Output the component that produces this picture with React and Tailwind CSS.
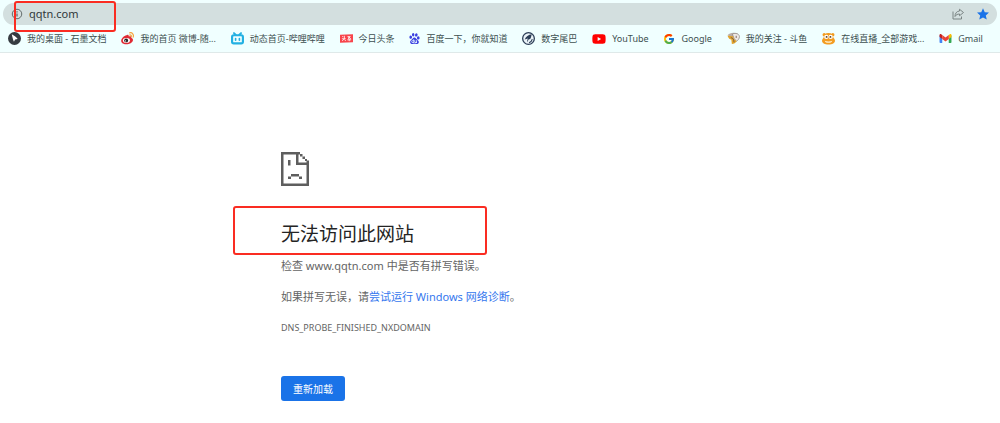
import { useState } from 'react';
import { FaYoutube } from 'react-icons/fa';
import { FcGoogle } from 'react-icons/fc';
import { SiBaidu } from 'react-icons/si';

function ShimoIcon() {
  return (
    <svg className="size-[13px] shrink-0" viewBox="0 0 24 24" aria-hidden="true">
      <circle cx="12" cy="12" r="12" fill="#353b41" />
      <path d="M7 4c1 5 2 9 4 14l2-4 5-1C15 9 11 6 7 4Z" fill="#fff" />
    </svg>
  );
}

function WeiboIcon() {
  return (
    <svg className="size-[13px] shrink-0" viewBox="0 0 24 24" aria-hidden="true">
      <path
        d="M10 6c2-2 5-1 4 2 4-1 6 0 5 3 4 1 4 5 1 8-5 5-16 5-19 0-3-5 4-12 9-13Z"
        fill="#e02b34"
      />
      <ellipse cx="10" cy="15.500" rx="6.500" ry="4.500" fill="#fff" />
      <circle cx="9.500" cy="15.500" r="3.600" fill="#222" />
      <circle cx="8.500" cy="16.500" r="1.100" fill="#fff" />
      <path d="M16 1.500c5-1 8 3 6.500 8M16 5.500c2-.5 3.500 1 3 3" fill="none" stroke="#f5a33b" strokeWidth="2.200" strokeLinecap="round" />
    </svg>
  );
}

function BilibiliIcon() {
  return (
    <svg className="size-[13px] shrink-0" viewBox="0 0 24 24" fill="none" stroke="#22b0e2" aria-hidden="true">
      <path d="m5.500 2 3 3M18.500 2l-3 3" strokeWidth="3.500" strokeLinecap="round" />
      <rect x="2" y="6" width="20" height="15" rx="3" strokeWidth="4" />
      <path d="M8.500 12v3M15.500 12v3" strokeWidth="3" strokeLinecap="round" />
    </svg>
  );
}

function ToutiaoIcon() {
  return (
    <svg className="size-[13px] shrink-0" viewBox="0 0 24 24" aria-hidden="true">
      <path d="M0 5 24 4v15L0 20Z" fill="#f8444b" />
      <path d="M4 8.500h2M3.500 12.500h7M8 7v5.500l-4 4M8.500 14l2 2.500M14 8.500h5l-4 4.500M14.500 9l6 4M13.500 14.500h7M17 13v4" fill="none" stroke="#fff" strokeWidth="1.500" />
    </svg>
  );
}

function DgtleIcon() {
  return (
    <svg className="size-[13px] shrink-0" viewBox="0 0 24 24" aria-hidden="true">
      <circle cx="12" cy="12" r="10.800" fill="#eaf3f8" stroke="#2c3e57" strokeWidth="2.400" />
      <path d="M5 14C7 8 12 5 18 4c-1 3-1 6-3 9l-3 1-2 5c-1-3 0-5 1-7-2 1-4 1-6 2Z" fill="#2c3e57" />
      <path d="M13 20c3-1 5-3 6-7" fill="none" stroke="#2c3e57" strokeWidth="2" />
    </svg>
  );
}

function DouyuIcon() {
  return (
    <svg className="size-[13px] shrink-0" viewBox="0 0 24 24" aria-hidden="true">
      <path d="M1 6C4 1 14 0 20 3l-3 5-7 3Z" fill="#b9aea8" />
      <path d="M10 4c5-3 12-1 13 4 0 5-3 7-5 9l-5-5Z" fill="#eee9e6" stroke="#8e8581" strokeWidth="1.400" />
      <path d="M1 7c2 5 4 7 7 7l1 8c4 0 7-2 9-5l-5-4-2-5Z" fill="#e3a42b" />
      <path d="m7 10 5 3 1 6M17 7v4" fill="none" stroke="#6d5752" strokeWidth="1.600" />
    </svg>
  );
}

function HuyaIcon() {
  return (
    <svg className="size-[13px] shrink-0" viewBox="0 0 24 24" aria-hidden="true">
      <circle cx="4" cy="5" r="3" fill="#f19a1f" />
      <circle cx="20" cy="5" r="3" fill="#f19a1f" />
      <path d="M12 2c6 0 9 4 9 8 2 2 3 4 3 6 0 4-5 7-12 7S0 20 0 16c0-2 1-4 3-6 0-4 3-8 9-8Z" fill="#f39c21" />
      <circle cx="8" cy="9" r="4" fill="#fff" />
      <circle cx="16" cy="9" r="4" fill="#fff" />
      <circle cx="8.500" cy="9" r="1.800" fill="#5d3b1d" />
      <circle cx="15.500" cy="9" r="1.800" fill="#5d3b1d" />
      <path d="M5 16c4 2 10 2 14 0-1 3-3 4-7 4s-6-1-7-4Z" fill="#fff0cf" />
    </svg>
  );
}

function GmailIcon() {
  return (
    <svg className="size-[13px] shrink-0" viewBox="0 0 24 24" aria-hidden="true">
      <path d="M1 6v13c0 1 .5 1.500 1.500 1.500H6V10Z" fill="#4285f4" />
      <path d="M23 6v13c0 1-.5 1.500-1.500 1.500H18V10Z" fill="#34a853" />
      <path d="M18 5.500 20 4c1.500-1 3 0 3 2v3l-5 4Z" fill="#fbbc04" />
      <path d="M1 6c0-2 1.500-3 3-2l2 1.500V13L1 9Z" fill="#c5221f" />
      <path d="m6 5.500 6 4.500 6-4.500V13l-6 4.500L6 13Z" fill="#ea4335" />
    </svg>
  );
}

function ShareIcon() {
  return (
    <svg className="size-3" viewBox="0 0 24 24" fill="none" stroke="#7b8584" strokeWidth="2" strokeLinejoin="round" aria-hidden="true">
      <path d="M2 7v15h17v-5" />
      <path d="M15 2.500 23 9l-8 6.500V12c-4 0-7 1.500-9 5 0-6 3-10.500 9-11Z" />
    </svg>
  );
}

function StarIcon() {
  return (
    <svg className="size-3" viewBox="0 0 24 24" fill="#1a73e8" aria-hidden="true">
      <path d="m12 .5 3.500 7.800 8.500.8-6.400 5.700 1.900 8.400L12 18.800l-7.500 4.400 1.900-8.400L0 9.100l8.500-.8Z" />
    </svg>
  );
}

function SadPageIcon() {
  return (
    <svg className="h-[34px] w-7" viewBox="0 0 28 34" fill="#5e5e5e" aria-hidden="true">
      <path d="M0 0h19v2.500H2.500v29h23V13H15V2h2.500v8.500H28V34H0Z" />
      <path d="M19 2h2.500v2.500H19zM21.500 4.500H24V7h-2.500zM24 7h2v2h-2zM25.500 8.500H28V11h-2.500z" />
      <path d="M7 8h2.500v5.500H7z" />
      <path d="M10 22h8v2.500h-8zM7 24.500h3V27H7zM18 24.500h3V27h-3z" />
    </svg>
  );
}

const bookmarks = [
  { label: '我的桌面 - 石墨文档', icon: <ShimoIcon /> },
  { label: '我的首页 微博-随...', icon: <WeiboIcon /> },
  { label: '动态首页-哔哩哔哩', icon: <BilibiliIcon /> },
  { label: '今日头条', icon: <ToutiaoIcon /> },
  { label: '百度一下，你就知道', icon: <SiBaidu className="size-[11px] shrink-0 text-[#3a3fe0]" /> },
  { label: '数字尾巴', icon: <DgtleIcon /> },
  { label: 'YouTube', icon: <FaYoutube className="size-3.5 shrink-0 text-[#ff0000]" /> },
  { label: 'Google', icon: <FcGoogle className="size-3 shrink-0" /> },
  { label: '我的关注 - 斗鱼', icon: <DouyuIcon /> },
  { label: '在线直播_全部游戏...', icon: <HuyaIcon /> },
  { label: 'Gmail', icon: <GmailIcon /> },
];

function AddressBar() {
  const [address, setAddress] = useState('qqtn.com');

  return (
    <div className="mx-[3px] flex h-[22px] items-center rounded-full bg-[#d3dfdf] pr-2 pl-2">
      <svg className="size-3 shrink-0" viewBox="0 0 24 24" fill="none" stroke="#626b6b" strokeWidth="2" aria-hidden="true">
        <circle cx="12" cy="12" r="9.500" />
        <path d="M12 11v6M12 6.500v2.500" strokeWidth="2.500" />
      </svg>
      <input
        aria-label="地址"
        className="ml-1.5 min-w-0 flex-1 bg-transparent text-[11px] leading-4 text-[#30383a] outline-none"
        onChange={(event) => setAddress(event.target.value)}
        spellCheck={false}
        type="text"
        value={address}
      />
      <div className="flex items-center gap-[13px]">
        <button aria-label="分享" type="button">
          <ShareIcon />
        </button>
        <button aria-label="收藏" type="button">
          <StarIcon />
        </button>
      </div>
    </div>
  );
}

function App() {
  return (
    <div className="min-h-screen bg-white font-['Noto_Sans','Noto_Sans_CJK_SC',sans-serif]">
      <header className="relative border-b border-[#dfe9e9] bg-[#f0ffff] pt-[3px]">
        <AddressBar />
        <nav className="flex h-[27px] items-center justify-between overflow-hidden pr-[17px] pl-2" aria-label="书签">
          {bookmarks.map((bookmark) => (
            <a
              className="flex items-center gap-1.5 text-[9px] leading-4 whitespace-nowrap text-[#3d4f50]"
              href="#"
              key={bookmark.label}
            >
              {bookmark.icon}
              {bookmark.label}
            </a>
          ))}
        </nav>
        <div className="pointer-events-none absolute top-px left-3.5 h-[31px] w-[102px] rounded-[3px] border-2 border-[#fa2c22]" />
      </header>

      <main className="mx-auto w-full max-w-[438px] pt-[99px] text-[11px] leading-4 text-[#646464]">
        <SadPageIcon />
        <div className="relative mt-8">
          <h1 className="text-[19px] leading-8 text-[#242424]">无法访问此网站</h1>
          <div className="pointer-events-none absolute -top-3 -left-12 h-[49px] w-[254px] rounded-[3px] border-2 border-[#fa2c22]" />
        </div>
        <p className="mt-2">检查 www.qqtn.com 中是否有拼写错误。</p>
        <p className="mt-[15px]">
          如果拼写无误，请
          <a className="text-[#3577ee]" href="#">
            尝试运行 Windows 网络诊断
          </a>
          。
        </p>
        <p className="mt-[15px] text-[9px]">DNS_PROBE_FINISHED_NXDOMAIN</p>
        <button className="mt-10 h-[25px] rounded-[3px] bg-[#1a73e8] px-3 text-[10px] text-white" type="button">
          重新加载
        </button>
      </main>
    </div>
  );
}

export default App;
